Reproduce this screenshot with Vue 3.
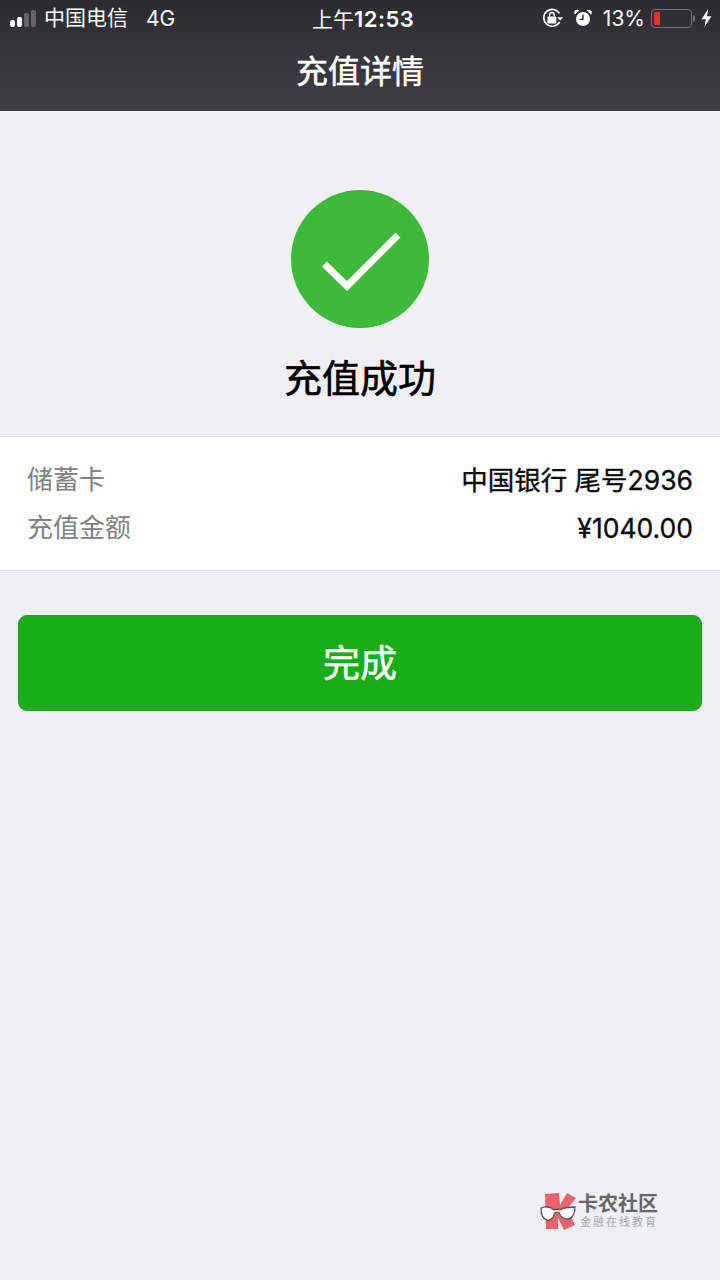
<script setup>
const rows = [
  { label: "储蓄卡", value: "中国银行 尾号2936" },
  { label: "充值金额", value: "¥1040.00" },
];
</script>

<template>
  <div class="page">
    <header class="head">
      <div class="status">
        <div class="status-left">
          <div class="signal">
            <i class="on b1"></i><i class="on b2"></i><i class="b3"></i><i class="b4"></i>
          </div>
          <span class="carrier">中国电信</span>
          <span class="net">4G</span>
        </div>
        <div class="clock">上午<b>12:53</b></div>
        <div class="status-right">
          <svg class="lock" width="21" height="20" viewBox="0 0 21 20">
            <path d="M17.6 13.8A8.4 8.4 0 1 1 17.4 5.4" fill="none" stroke="#fff" stroke-width="1.6" />
            <path d="M15 9.2l3.2 3.4 2.8-3.4z" fill="#fff" />
            <rect x="5.4" y="8.4" width="9" height="7" rx="1" fill="#fff" />
            <path d="M7.6 8.6V6.8a2.3 2.3 0 0 1 4.6 0v1.8" fill="none" stroke="#fff" stroke-width="1.4" />
          </svg>
          <svg class="alarm" width="18" height="18" viewBox="0 0 18 18">
            <circle cx="9" cy="10" r="7" fill="#fff" />
            <path d="M1 5.2L4.6 1.6 1.9 1.2 0.8 2.6z M17 5.2L13.4 1.6 16.1 1.2 17.2 2.6z" fill="#fff" stroke="#fff" />
            <path d="M9 5.6V10.4H5.6" fill="none" stroke="#333238" stroke-width="1.4" />
          </svg>
          <span class="pct">13%</span>
          <div class="battery"><i></i></div>
          <div class="nub"></div>
          <svg class="bolt" width="11" height="18" viewBox="0 0 11 18">
            <path d="M7.2 0L0.6 10.2H4.8L3.4 18 10.4 7.2H6.1z" fill="#fff" />
          </svg>
        </div>
      </div>
      <h1 class="title">充值详情</h1>
    </header>

    <section class="result">
      <svg class="ok" width="138" height="138" viewBox="0 0 138 138">
        <circle cx="69" cy="69" r="69" fill="#3eb93a" />
        <path d="M33.5 74L56 96 107 45" fill="none" stroke="#fff" stroke-width="7" />
      </svg>
      <h2 class="msg">充值成功</h2>
    </section>

    <section class="card">
      <div class="row" v-for="r in rows" :key="r.label">
        <span class="label">{{ r.label }}</span>
        <span class="value">{{ r.value }}</span>
      </div>
    </section>

    <div class="btn-wrap">
      <button class="done">完成</button>
    </div>

    <div class="mark">
      <svg width="38" height="38" viewBox="0 0 38 38">
        <path d="M5 2L19 1 20 13 27 1 36 6 27 17 35 33 24 38 18 26 18 37 6 37z" fill="#e8636c" />
        <path d="M1 16C6 14 11 15 14 18 16 17 18 17 20 18 24 15 30 15 35 15 35 22 32 27 27 27 23 27 20 24 19.5 21 18 20 16 20 14.5 21 14 26 10 29 7 28 3 27 1 22 1 16z" fill="#fff" stroke="#555" stroke-width="1.3" />
      </svg>
      <div class="mark-text">
        <div class="mark-name">卡农社区</div>
        <div class="mark-sub">金融在线教育</div>
      </div>
    </div>
  </div>
</template>

<style scoped>
.page {
  position: relative;
  height: 1280px;
  overflow: hidden;
  background: #efeff4;
  font-family: "Inter", "Noto Sans CJK SC", sans-serif;
  color: #000;
}
.head {
  height: 111px;
  box-sizing: border-box;
  background: linear-gradient(#2c2b30, #3f3e45);
  color: #fff;
}
.status {
  height: 36px;
  display: flex;
  align-items: center;
  justify-content: space-between;
  position: relative;
  padding: 0 8px 0 10px;
  font-size: 21px;
}
.status-left,
.status-right {
  display: flex;
  align-items: center;
}
.signal {
  display: flex;
  align-items: flex-end;
  gap: 2px;
  margin-right: 6px;
}
.signal i {
  display: block;
  width: 5px;
  border-radius: 2px;
  background: #66656a;
}
.signal .on {
  background: #fff;
}
.b1 { height: 7px; }
.b2 { height: 10px; }
.b3 { height: 14px; }
.b4 { height: 17px; }
.carrier {
  margin-left: 2px;
  line-height: 32px;
}
.net {
  margin-left: 18px;
}
.clock {
  position: absolute;
  left: 312px;
  top: 5px;
  font-size: 21px;
  line-height: 28px;
}
.clock b {
  font-size: 22px;
  font-weight: 600;
  letter-spacing: 0.5px;
}
.lock {
  margin-right: 11px;
}
.alarm {
  margin-right: 11px;
}
.pct {
  font-size: 21px;
  margin-right: 6px;
}
.battery {
  width: 41px;
  height: 19px;
  box-sizing: border-box;
  border: 1.5px solid #77767a;
  border-radius: 4px;
  padding: 2px;
}
.battery i {
  display: block;
  width: 6px;
  height: 100%;
  background: #e8332c;
  border-radius: 1px;
}
.nub {
  width: 2px;
  height: 7px;
  margin: 0 6px 0 1px;
  background: #77767a;
  border-radius: 0 2px 2px 0;
}
.title {
  margin: 13px 0 0;
  text-align: center;
  font-size: 32px;
  font-weight: 400;
  -webkit-text-stroke: 0.5px #fff;
  line-height: 46px;
}
.result {
  height: 325px;
  box-sizing: border-box;
  padding-top: 79px;
  display: flex;
  flex-direction: column;
  align-items: center;
}
.ok {
  display: block;
}
.msg {
  margin: 25px 0 0;
  font-size: 38px;
  font-weight: 400;
  -webkit-text-stroke: 0.6px #000;
  line-height: 50px;
}
.card {
  height: 135px;
  box-sizing: border-box;
  padding: 19px 27px 0 27px;
  background: #fff;
  border-top: 1px solid #e2e2e6;
  border-bottom: 1px solid #dddde1;
}
.row {
  height: 48px;
  display: flex;
  align-items: center;
  justify-content: space-between;
}
.label {
  font-size: 26px;
  line-height: 32px;
  color: #808080;
}
.value {
  font-size: 26.5px;
  line-height: 32px;
  font-weight: 400;
  -webkit-text-stroke: 0.35px #0a0a0a;
  color: #0a0a0a;
}
.btn-wrap {
  padding: 44px 18px 0;
}
.done {
  display: block;
  width: 100%;
  height: 96px;
  box-sizing: border-box;
  padding: 0 0 4px;
  border: 1px solid #2b9a27;
  border-radius: 9px;
  background: #1aad19;
  color: #fff;
  font-family: inherit;
  font-size: 37px;
  font-weight: 400;
  -webkit-text-stroke: 0.5px #fff;
}
.mark {
  position: absolute;
  left: 540px;
  top: 1192px;
  display: flex;
  align-items: center;
}
.mark-text {
  width: 82px;
}
.mark-name {
  font-size: 20px;
  line-height: 22px;
  font-weight: 700;
  color: #666;
}
.mark-sub {
  font-size: 11px;
  line-height: 14px;
  letter-spacing: 2px;
  margin-left: 2px;
  color: #a8a8a8;
  white-space: nowrap;
}
</style>
